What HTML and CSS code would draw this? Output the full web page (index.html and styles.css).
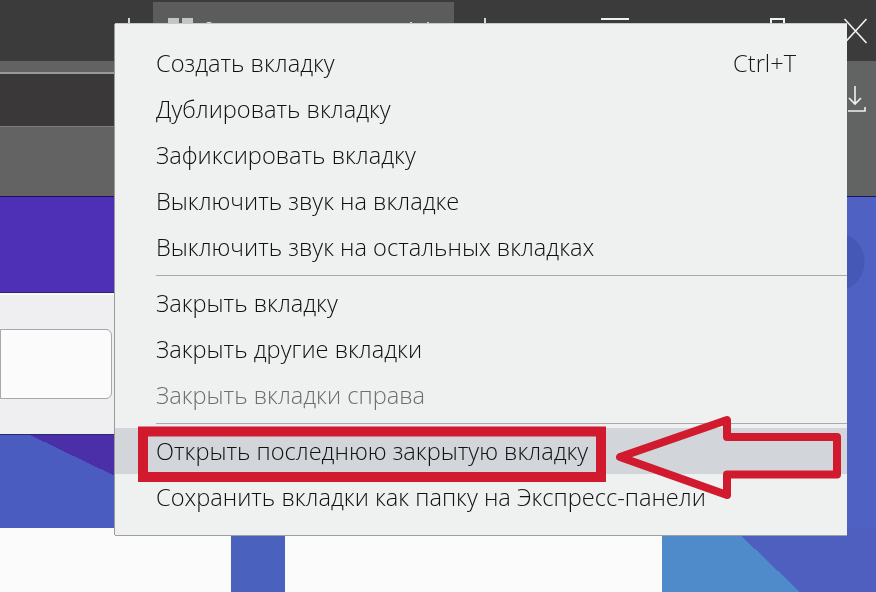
FILE: index.html
```html
<!DOCTYPE html>
<html lang="ru">
<head>
  <meta charset="UTF-8">
  <meta name="viewport" content="width=device-width, initial-scale=1.0">
  <title>Меню вкладки</title>
  <link rel="stylesheet" href="styles.css">
</head>
<body>
  <div class="page">
    <div class="titlebar">
      <span class="tick tick-back"></span>
      <div class="tab">
        <span class="tab-icon"></span>
        <span class="tab-icon"></span>
        <span class="tab-dot"></span>
        <span class="tick tick-a"></span>
        <span class="tick tick-b"></span>
      </div>
      <span class="tick tick-plus"></span>
      <div class="win-controls">
        <span class="win-min"></span>
        <span class="win-max"></span>
        <svg class="win-close" width="25" height="26" viewBox="0 0 25 26">
          <path d="M1.500 1 L23.500 25 M23.500 1 L1.500 25" stroke="#f2f2f2" stroke-width="1.6" fill="none"/>
        </svg>
      </div>
    </div>

    <div class="chrome">
      <div class="chrome-left">
        <div class="strip"></div>
        <div class="address"></div>
        <div class="bookmarks"></div>
      </div>
      <div class="chrome-right">
        <svg width="20" height="28" viewBox="0 0 20 28">
          <path d="M8 1 V19 M2 13 L8 19 L14 13 M1 26 H18 V22" stroke="#f0f0f0" stroke-width="1.6" fill="none"/>
        </svg>
      </div>
    </div>

    <div class="content">
      <div class="content-left">
        <div class="band-purple"></div>
        <div class="band-white">
          <div class="search-box"></div>
        </div>
        <div class="band-blue"></div>
      </div>
      <div class="content-right"></div>
    </div>

    <div class="tiles">
      <div class="tile tile-a"></div>
      <div class="tile-gap"></div>
      <div class="tile tile-b"></div>
      <div class="tile-end"></div>
    </div>

    <div class="menu">
      <div class="item"><span>Создать вкладку</span><span class="key">Ctrl+T</span></div>
      <div class="item">Дублировать вкладку</div>
      <div class="item">Зафиксировать вкладку</div>
      <div class="item">Выключить звук на вкладке</div>
      <div class="item">Выключить звук на остальных вкладках</div>
      <div class="sep"></div>
      <div class="item">Закрыть вкладку</div>
      <div class="item">Закрыть другие вкладки</div>
      <div class="item disabled">Закрыть вкладки справа</div>
      <div class="sep"></div>
      <div class="item active">Открыть последнюю закрытую вкладку</div>
      <div class="item">Сохранить вкладки как папку на Экспресс-панели</div>
    </div>

    <svg class="marks" width="876" height="592" viewBox="0 0 876 592">
      <rect x="143" y="431.500" width="458" height="45.500" fill="none" stroke="#d11a2d" stroke-width="10"/>
      <path d="M620 457 L727 420 V437 H837 V474.500 H727 V495 Z" fill="none" stroke="#d11a2d" stroke-width="8" stroke-linejoin="round"/>
    </svg>
  </div>
</body>
</html>
```

FILE: styles.css
```css
body {
  margin: 0;
  overflow: hidden;
  background: #f4f4f4;
}
.page {
  position: relative;
  width: 876px;
  height: 592px;
  overflow: hidden;
  font-family: "Open Sans", "Noto Sans", sans-serif;
  filter: blur(0.4px);
}

/* browser window behind the menu */
.titlebar {
  display: flex;
  height: 61px;
  background: #3c3b3c;
  box-sizing: border-box;
  padding-top: 2px;
}
.tick {
  flex: none;
  width: 2px;
  height: 6px;
  margin-top: 16px;
  background: #d8d8d8;
}
.tick-back {
  margin-left: 128px;
  margin-right: 23px;
}
.tab {
  display: flex;
  align-items: flex-start;
  flex: none;
  width: 301px;
  padding: 16px 0 0 15px;
  box-sizing: border-box;
  background: #5c5c5c;
}
.tab-icon {
  width: 11px;
  height: 14px;
  margin-right: 3px;
  background: #c4c4c4;
}
.tab-dot {
  width: 10px;
  height: 10px;
  margin: 4px 0 0 8px;
  border-radius: 50%;
  background: #e8e8e8;
}
.tab .tick {
  margin-top: 4px;
  height: 2px;
}
.tick-a {
  margin-left: 196px;
}
.tick-b {
  margin-left: 15px;
}
.tick-plus {
  margin-left: 30px;
}
.win-controls {
  display: flex;
  align-items: flex-start;
  flex: 1;
  padding: 16px 8px 0 115px;
}
.win-min {
  width: 28px;
  height: 2px;
  background: #f0f0f0;
}
.win-max {
  width: 15px;
  height: 15px;
  margin-left: 141px;
  border: 2px solid #f0f0f0;
  box-sizing: border-box;
}
.win-close {
  margin-left: auto;
}

.chrome {
  display: flex;
  height: 135px;
}
.chrome-left {
  width: 500px;
}
.strip {
  height: 11px;
  background: #626262;
  border-bottom: 2px solid #9a9a9a;
}
.address {
  height: 52px;
  background: #3a3838;
  border-bottom: 1px solid #7c7c7c;
}
.bookmarks {
  height: 69px;
  background: #636363;
}
.chrome-right {
  flex: 1;
  background: #626463;
  padding: 24px 0 0 347px;
}

.content {
  display: flex;
  height: 332px;
  border-top: 1px solid #1b1466;
  box-sizing: border-box;
}
.content-left {
  width: 500px;
}
.band-purple {
  height: 96px;
  background: #4d30b6;
  border-bottom: 1px solid #2c2470;
  box-sizing: border-box;
}
.band-white {
  height: 141px;
  padding-top: 34px;
  box-sizing: border-box;
  background: #efeff1;
  border-top: 2px solid #f8f8f8;
}
.search-box {
  width: 112px;
  height: 70px;
  box-sizing: border-box;
  background: #fbfbfb;
  border: 1px solid #a8a8a8;
  border-radius: 0 6px 6px 0;
}
.band-blue {
  height: 94px;
  border-top: 1px solid #2c2a6c;
  box-sizing: border-box;
  background:
    linear-gradient(to top right, transparent 50%, #4a2fa8 50%) 30px 0 / 85px 41px no-repeat,
    #4b5cc0;
}
.content-right {
  flex: 1;
  background: radial-gradient(circle 30px at 335px 65px, #4558b6 97%, transparent 100%), #4f62c4;
}

.tiles {
  display: flex;
  height: 64px;
}
.tile {
  background: #fbfbfb;
}
.tile-a {
  width: 231px;
}
.tile-gap {
  width: 54px;
  background: #4a62bd;
}
.tile-b {
  width: 377px;
}
.tile-end {
  flex: 1;
  background:
    linear-gradient(to top right, #4f8bca 50%, transparent 50%) 71px 0 / 67px 64px no-repeat,
    linear-gradient(#4f8bca, #4f8bca) 0 0 / 71px 64px no-repeat,
    #4e5fc0;
}

/* context menu */
.menu {
  position: absolute;
  left: 115px;
  top: 24px;
  width: 732px;
  height: 511px;
  box-sizing: border-box;
  padding: 16px 0 15px;
  background: #eff1f0;
  box-shadow: -1px 0 0 #9a9a9a, 0 -1px 0 #c8c8c8, 0 1px 0 #9aa0a6;
}
.item {
  display: flex;
  justify-content: space-between;
  align-items: center;
  height: 46px;
  padding: 0 51px 0 41px;
  font-size: 23.600px;
  font-weight: 300;
  color: #111;
  white-space: nowrap;
}
.key {
  color: #1a1a1a;
}
.disabled {
  color: #6e6e6e;
}
.active {
  background: #d2d6da;
}
.sep {
  height: 1px;
  margin: 5px 0 4px 41px;
  background: #aaa;
}

/* red annotation drawn over the screenshot */
.marks {
  position: absolute;
  left: 0;
  top: 0;
}
```
